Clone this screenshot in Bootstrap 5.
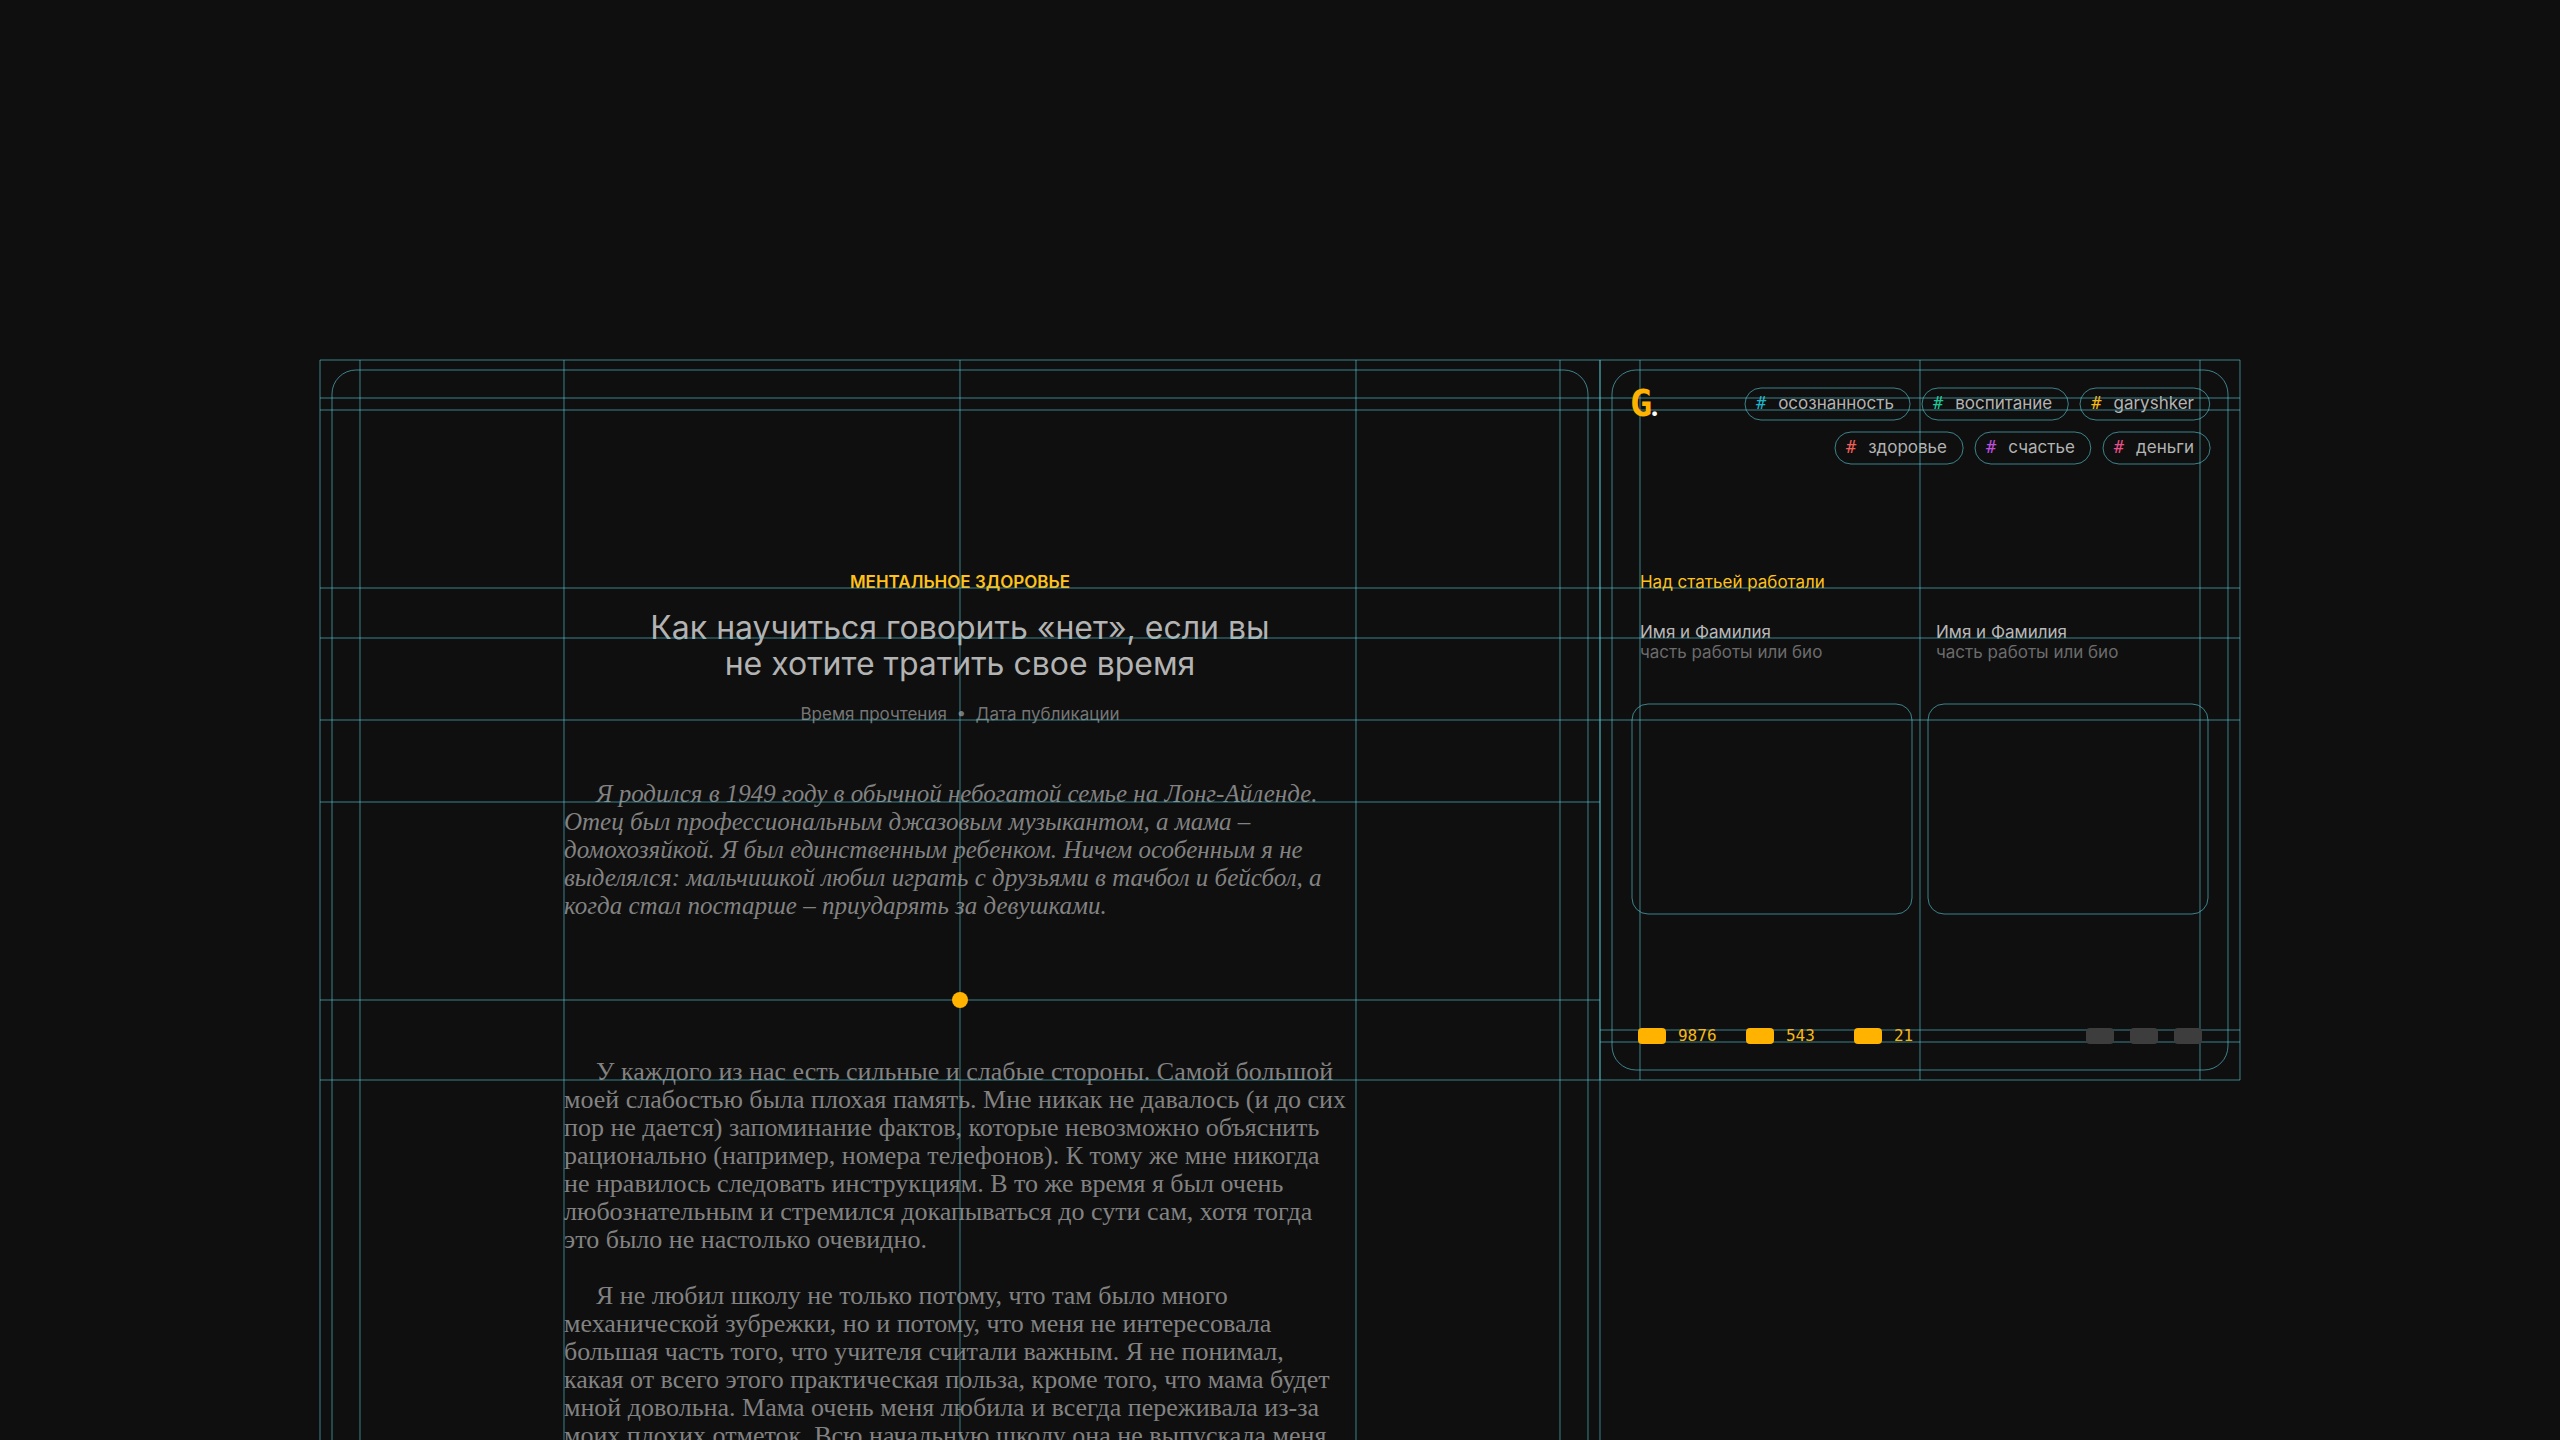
<!DOCTYPE html>
<html lang="ru">
<head>
<meta charset="utf-8">
<meta name="viewport" content="width=device-width, initial-scale=1">
<title>Как научиться говорить «нет»</title>
<link href="https://cdn.jsdelivr.net/npm/bootstrap@5.3.0/dist/css/bootstrap.min.css" rel="stylesheet">
<style>
  :root {
    --ink: #0f0f0f;
    --amber: #ffb300;
    --guide: rgba(92, 206, 220, .6);
    --ui: Inter, "Noto Sans", sans-serif;
    --mono: "DejaVu Sans Mono", "Liberation Mono", monospace;
    --text-serif: "Liberation Serif", serif;
  }
  body { background: var(--ink); color: #b3b3b3; font-family: var(--ui); font-size: 17px; line-height: 20px; }
  a { color: inherit; text-decoration: none; }
  .stage { padding: 360px 12.5% 0; height: 100vh; overflow: hidden; }

  /* construction lines drawn over the text */
  .guides { position: absolute; inset: 0; width: 100%; height: 100%; z-index: 1; pointer-events: none; overflow: visible; }
  .guides line, .guides rect, .outline rect { stroke: var(--guide); stroke-width: 1px; fill: none; }
  .outline { position: absolute; inset: 0; width: 100%; height: 100%; overflow: visible; pointer-events: none; }
  .on-top { position: relative; z-index: 2; }

  .article { min-height: 1120px; padding-top: 212px; }
  .article .frame { x: 12px; y: 10px; width: calc(100% - 24px); height: calc(100% + 100px); }
  .rubric { color: #ffc21a; font-size: 17px; line-height: 20px; margin: 0; }
  .headline { font-size: 32px; line-height: 36px; font-weight: 400; margin: 18px 0 0; }
  .byline { color: #757575; margin-top: 22px; }
  .prose { width: 792px; font-family: var(--text-serif); font-size: 26px; line-height: 28px; color: #828282; }
  .prose p { text-indent: 32px; white-space: nowrap; margin: 0 0 28px; }
  .prose.intro { font-size: 25px; margin: 56px 0 44px; }
  .bullet { width: 16px; height: 16px; background: var(--amber); margin-bottom: 50px; }

  .side { height: 720px; padding: 28px 32px 34px; }
  .side .frame { x: 12px; y: 10px; width: calc(100% - 24px); height: calc(100% - 20px); }
  .side header { margin-right: -2px; }
  .brand-mark { font: 700 37px/32px var(--mono); color: var(--amber); margin-left: -2px; }
  .brand-mark span { font: 900 28px/32px Lato, sans-serif; color: #fff; margin-left: -1px; }
  .tag-row { gap: 12px; }
  .tag { height: 32px; padding: 0 16px 2px 11px; gap: 12px; }
  .tag b { font: 400 17px/20px var(--mono); }
  .tag-teal { color: #1fb5c9; }
  .tag-green { color: #1fc997; }
  .tag-gold { color: #f5b912; }
  .tag-red { color: #f0605a; }
  .tag-violet { color: #c04fe0; }
  .tag-pink { color: #e8508a; }
  .credits { margin-top: 108px; padding-left: 8px; }
  .people { column-gap: 16px; margin-top: 30px; }
  .people > div { flex: 1 1 0; padding-left: 8px; }
  .person-name { color: #b8b8b8; }
  .person-note { color: #6b6b6b; }
  .thumbs { column-gap: 16px; margin-top: 42px; }
  .thumb { flex: 1 1 0; height: 210px; }
  .side footer { padding: 0 6px; }
  .chip { width: 28px; height: 16px; border-radius: 4px; border: 0; padding: 0; background: var(--amber); }
  .chip-off { background: #3d3d3d; }
  .stat { width: 108px; gap: 12px; font-family: var(--mono); font-size: 16px; color: #f5b912; }
</style>
</head>
<body>
<div class="stage">
  <div class="row g-0 align-items-start">
    <main class="col-8 position-relative article d-flex flex-column align-items-center">
      <div class="rubric fw-semibold">МЕНТАЛЬНОЕ ЗДОРОВЬЕ</div>
      <h1 class="headline text-center">Как научиться говорить «нет», если вы<br>не хотите тратить свое время</h1>
      <div class="byline">Время прочтения&nbsp; •&nbsp; Дата публикации</div>
      <div class="prose intro fst-italic">
        <p>Я родился в 1949 году в обычной небогатой семье на Лонг-Айленде.<br>Отец был профессиональным джазовым музыкантом, а мама –<br>домохозяйкой. Я был единственным ребенком. Ничем особенным я не<br>выделялся: мальчишкой любил играть с друзьями в тачбол и бейсбол, а<br>когда стал постарше – приударять за девушками.</p>
      </div>
      <div class="bullet rounded-circle on-top"></div>
      <div class="prose">
        <p>У каждого из нас есть сильные и слабые стороны. Самой большой<br>моей слабостью была плохая память. Мне никак не давалось (и до сих<br>пор не дается) запоминание фактов, которые невозможно объяснить<br>рационально (например, номера телефонов). К тому же мне никогда<br>не нравилось следовать инструкциям. В то же время я был очень<br>любознательным и стремился докапываться до сути сам, хотя тогда<br>это было не настолько очевидно.</p>
        <p>Я не любил школу не только потому, что там было много<br>механической зубрежки, но и потому, что меня не интересовала<br>большая часть того, что учителя считали важным. Я не понимал,<br>какая от всего этого практическая польза, кроме того, что мама будет<br>мной довольна. Мама очень меня любила и всегда переживала из-за<br>моих плохих отметок. Всю начальную школу она не выпускала меня</p>
      </div>
      <svg class="guides" aria-hidden="true">
        <line x1="0" y1="0" x2="100%" y2="0"/><line x1="0" y1="38" x2="100%" y2="38"/><line x1="0" y1="50" x2="100%" y2="50"/>
        <line x1="0" y1="228" x2="100%" y2="228"/><line x1="0" y1="278" x2="100%" y2="278"/><line x1="0" y1="360" x2="100%" y2="360"/>
        <line x1="0" y1="442" x2="100%" y2="442"/><line x1="0" y1="640" x2="100%" y2="640"/><line x1="0" y1="720" x2="100%" y2="720"/>
        <line x1="0" y1="0" x2="0" y2="100%"/><line x1="3.125%" y1="0" x2="3.125%" y2="100%"/><line x1="19.0625%" y1="0" x2="19.0625%" y2="100%"/>
        <line x1="50%" y1="0" x2="50%" y2="100%"/><line x1="80.9375%" y1="0" x2="80.9375%" y2="100%"/><line x1="96.875%" y1="0" x2="96.875%" y2="100%"/><line x1="100%" y1="0" x2="100%" y2="100%"/>
        <rect class="frame" rx="24"/>
      </svg>
    </main>

    <aside class="col-4 position-relative side d-flex flex-column">
      <header class="d-flex justify-content-between align-items-start">
        <a class="brand-mark on-top" href="#">G<span>.</span></a>
        <nav class="d-flex flex-column align-items-end tag-row" aria-label="Темы">
          <div class="d-flex tag-row">
            <a class="tag d-flex align-items-center position-relative" href="#"><svg class="outline" aria-hidden="true"><rect width="100%" height="100%" rx="16"/></svg><b class="tag-teal">#</b>осознанность</a>
            <a class="tag d-flex align-items-center position-relative" href="#"><svg class="outline" aria-hidden="true"><rect width="100%" height="100%" rx="16"/></svg><b class="tag-green">#</b>воспитание</a>
            <a class="tag d-flex align-items-center position-relative" href="#"><svg class="outline" aria-hidden="true"><rect width="100%" height="100%" rx="16"/></svg><b class="tag-gold">#</b>garyshker</a>
          </div>
          <div class="d-flex tag-row">
            <a class="tag d-flex align-items-center position-relative" href="#"><svg class="outline" aria-hidden="true"><rect width="100%" height="100%" rx="16"/></svg><b class="tag-red">#</b>здоровье</a>
            <a class="tag d-flex align-items-center position-relative" href="#"><svg class="outline" aria-hidden="true"><rect width="100%" height="100%" rx="16"/></svg><b class="tag-violet">#</b>счастье</a>
            <a class="tag d-flex align-items-center position-relative" href="#"><svg class="outline" aria-hidden="true"><rect width="100%" height="100%" rx="16"/></svg><b class="tag-pink">#</b>деньги</a>
          </div>
        </nav>
      </header>
      <h2 class="rubric credits fw-normal">Над статьей работали</h2>
      <div class="d-flex people">
        <div><div class="person-name">Имя и Фамилия</div><div class="person-note">часть работы или био</div></div>
        <div><div class="person-name">Имя и Фамилия</div><div class="person-note">часть работы или био</div></div>
      </div>
      <div class="d-flex thumbs">
        <div class="thumb position-relative"><svg class="outline" aria-hidden="true"><rect width="100%" height="100%" rx="16"/></svg></div>
        <div class="thumb position-relative"><svg class="outline" aria-hidden="true"><rect width="100%" height="100%" rx="16"/></svg></div>
      </div>
      <svg class="guides" aria-hidden="true">
        <line x1="0" y1="0" x2="100%" y2="0"/><line x1="0" y1="38" x2="100%" y2="38"/><line x1="0" y1="50" x2="100%" y2="50"/>
        <line x1="0" y1="228" x2="100%" y2="228"/><line x1="0" y1="278" x2="100%" y2="278"/><line x1="0" y1="360" x2="100%" y2="360"/>
        <line x1="0" y1="670" x2="100%" y2="670"/><line x1="0" y1="682" x2="100%" y2="682"/><line x1="0" y1="720" x2="100%" y2="720"/>
        <line x1="0" y1="0" x2="0" y2="100%"/><line x1="6.25%" y1="0" x2="6.25%" y2="100%"/><line x1="50%" y1="0" x2="50%" y2="100%"/>
        <line x1="93.75%" y1="0" x2="93.75%" y2="100%"/><line x1="100%" y1="0" x2="100%" y2="100%"/>
        <rect class="frame" rx="24"/>
      </svg>
      <footer class="d-flex justify-content-between align-items-center mt-auto on-top">
        <div class="d-flex">
          <div class="stat d-flex align-items-center"><button class="chip" aria-label="Просмотры"></button>9876</div>
          <div class="stat d-flex align-items-center"><button class="chip" aria-label="Лайки"></button>543</div>
          <div class="stat d-flex align-items-center"><button class="chip" aria-label="Комментарии"></button>21</div>
        </div>
        <div class="d-flex gap-3">
          <button class="chip chip-off" aria-label="Сохранить"></button>
          <button class="chip chip-off" aria-label="Поделиться"></button>
          <button class="chip chip-off" aria-label="Ещё"></button>
        </div>
      </footer>
    </aside>
  </div>
</div>
<script src="https://cdn.jsdelivr.net/npm/bootstrap@5.3.0/dist/js/bootstrap.bundle.min.js"></script>
</body>
</html>
